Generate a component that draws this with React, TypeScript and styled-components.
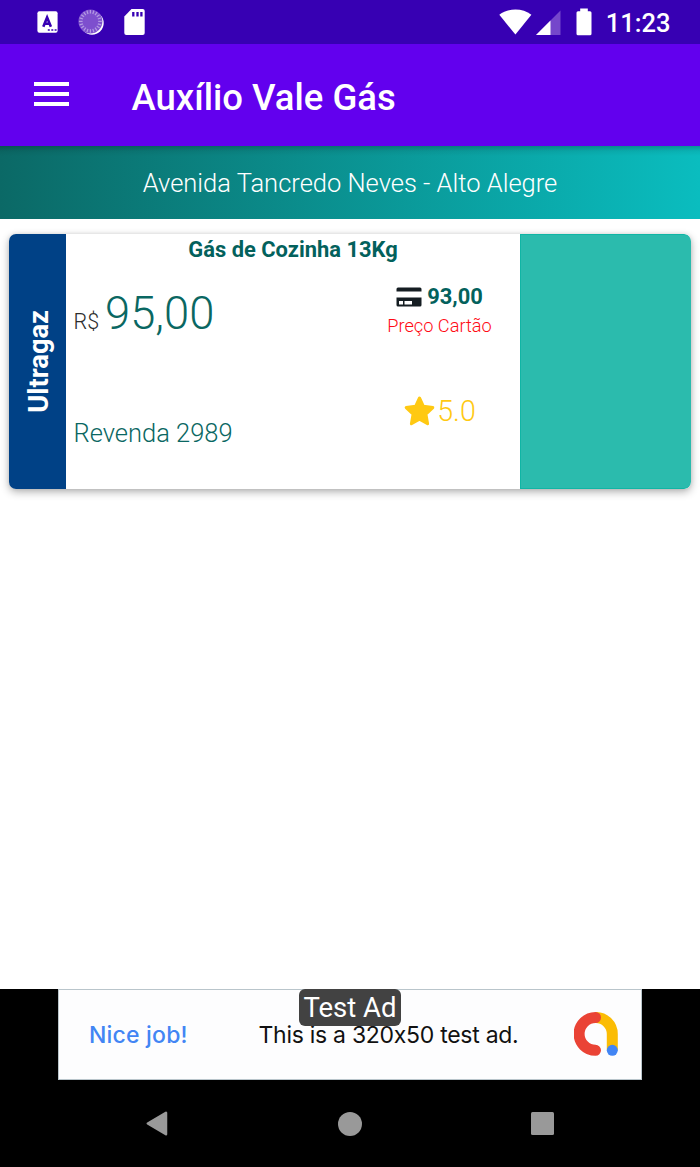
import React from "react";
import styled, { createGlobalStyle } from "styled-components";

const GlobalStyle = createGlobalStyle`
  * { box-sizing: border-box; }
  body { margin: 0; background: #fff; font-family: Roboto, sans-serif; }
  svg { display: block; flex: none; }
`;

const Screen = styled.div`
  width: 700px;
  height: 1167px;
  display: flex;
  flex-direction: column;
  overflow: hidden;
  background: #fff;
`;

const StatusBar = styled.header`
  height: 44px;
  flex: none;
  display: flex;
  align-items: center;
  justify-content: space-between;
  padding: 0 29.5px 0 37px;
  background: #3700b3;
  color: #fff;
`;

const StatusGroup = styled.div<{ $gap?: number }>`
  display: flex;
  align-items: center;
  gap: ${(p) => p.$gap ?? 0}px;
  height: 44px;
`;

const SignalIcon = styled.svg`
  margin: 0 15px 0 4px;
`;

const Clock = styled.span`
  font-size: 25.5px;
  font-weight: 500;
  line-height: 30px;
  margin-left: 14px;
  padding-top: 2px;
`;

const AppBar = styled.div`
  height: 102px;
  flex: none;
  display: flex;
  align-items: center;
  padding: 3px 0 0 34px;
  background: #6200ee;
  color: #fff;
`;

const MenuButton = styled.button`
  width: 35px;
  height: 24px;
  margin: 0 62.5px 6px 0;
  padding: 0;
  border: 0;
  background: none;
  display: flex;
  flex-direction: column;
  justify-content: space-between;
`;

const MenuLine = styled.span`
  height: 4px;
  background: #fff;
`;

const Title = styled.h1`
  margin: 0;
  padding-top: 2px;
  font-size: 36.5px;
  font-weight: 500;
  line-height: 44px;
`;

const AddressBar = styled.div`
  height: 73px;
  flex: none;
  display: flex;
  align-items: center;
  justify-content: center;
  background:
    linear-gradient(180deg, rgba(0, 0, 0, 0.22), rgba(0, 0, 0, 0.06) 5px, transparent 10px),
    linear-gradient(90deg, #0b6966, #0abdbf);
  color: #fff;
  font-size: 25.5px;
  font-weight: 300;
`;

const Content = styled.main`
  flex: 1;
  padding: 14.5px 9px;
`;

const Card = styled.article`
  height: 255px;
  display: flex;
  border-radius: 7px;
  background: #fff;
  overflow: hidden;
  box-shadow: 0 3px 8px rgba(0, 0, 0, 0.3), 0 0 4px rgba(0, 0, 0, 0.08);
`;

const Brand = styled.div`
  width: 56.5px;
  flex: none;
  display: flex;
  align-items: center;
  justify-content: center;
  padding-left: 3px;
  background: #004186;
  color: #fff;
`;

const BrandName = styled.span`
  writing-mode: vertical-rl;
  transform: rotate(180deg);
  font-size: 27.3px;
  font-weight: 700;
  line-height: 32px;
`;

const Details = styled.div`
  width: 454px;
  flex: none;
`;

const Product = styled.h2`
  margin: 0;
  padding-left: 1px;
  text-align: center;
  color: #03615c;
  font-size: 21.9px;
  font-weight: 700;
  line-height: 32px;
`;

const Columns = styled.div`
  display: grid;
  grid-template-columns: 294px 160px;
`;

const PriceColumn = styled.div`
  padding: 20px 0 0 8px;
  color: #0a6762;
`;

const Price = styled.div`
  display: flex;
  align-items: baseline;
  gap: 6px;
  font-size: 45.3px;
  font-weight: 300;
  line-height: 55px;
`;

const Currency = styled.span`
  color: #2c2c2c;
  font-size: 21.5px;
`;

const Reseller = styled.div`
  margin-top: 69px;
  font-size: 25.5px;
  font-weight: 300;
  line-height: 30px;
`;

const CardColumn = styled.div`
  padding-top: 18.5px;
  display: flex;
  flex-direction: column;
  align-items: center;
`;

const CardPrice = styled.div`
  display: flex;
  align-items: center;
  gap: 5px;
  color: #03615c;
  font-size: 21.9px;
  font-weight: 700;
  line-height: 26px;
`;

const CardLabel = styled.div`
  margin-top: 4px;
  color: #ff0a14;
  font-size: 18.2px;
  font-weight: 300;
  line-height: 24px;
`;

const Rating = styled.div`
  margin-top: 56px;
  padding-left: 1px;
  display: flex;
  align-items: center;
  gap: 2px;
  color: #ffc912;
  font-size: 28.6px;
  font-weight: 300;
  line-height: 34px;
`;

const Action = styled.div`
  flex: 1;
  background: #2bbbad;
  border: 1px solid #10b5a5;
  border-right: 0;
  border-radius: 0 7px 7px 0;
`;

const Footer = styled.footer`
  height: 178px;
  flex: none;
  background: #000;
`;

const Ad = styled.div`
  position: relative;
  width: 584px;
  height: 91px;
  margin: 0 auto;
  display: flex;
  align-items: center;
  padding-left: 30px;
  border: 1px solid #b9c5cb;
  background: #fdfdfe;
  font-family: Inter, sans-serif;
  font-size: 23px;
  line-height: 30px;
`;

const AdHeadline = styled.strong`
  width: 169.5px;
  color: #4285f4;
  font-weight: 500;
  letter-spacing: 0.2px;
`;

const AdText = styled.span`
  width: 315.5px;
  color: #111;
  letter-spacing: -0.28px;
  white-space: nowrap;
`;

const AdLogo = styled.svg`
  margin-bottom: 2px;
`;

const AdBadge = styled.span`
  position: absolute;
  left: 240px;
  top: -1px;
  width: 102px;
  height: 37px;
  border-radius: 6px;
  background: #424242;
  color: #fff;
  font: 400 27.5px/38px Roboto, sans-serif;
  text-align: center;
`;

const NavBar = styled.nav`
  height: 87px;
  display: flex;
  align-items: center;
  justify-content: space-between;
  padding: 0 146px;
`;

const rays = Array.from({ length: 20 }, (_, i) => i * 18);

export default function App() {
  return (
    <Screen>
      <GlobalStyle />
      <StatusBar>
        <StatusGroup $gap={20}>
          <svg width="21" height="22" viewBox="0 0 21 22">
            <rect x="0.4" y="0.3" width="20.2" height="21.4" rx="2" fill="#fff" />
            <path d="M6.3 15.8 10.1 6.5l3.8 9.3M7.8 12.7h4.6" fill="none" stroke="#3700b3" strokeWidth="2.6" />
            <path d="M10.8 19h2M14.3 19h2M17.6 19h2" stroke="#3700b3" strokeWidth="1.7" />
          </svg>
          <svg width="26" height="26" viewBox="0 0 26 26">
            <circle cx="14" cy="14" r="11.7" fill="#fff" />
            <circle cx="12.4" cy="12.4" r="12" fill="#7d4fce" />
            <g stroke="#b49be3" strokeWidth="1.2">
              {rays.map((a) => (
                <path key={a} d="M12.4 1v3.6" transform={`rotate(${a} 12.4 12.4)`} />
              ))}
            </g>
          </svg>
          <svg width="21" height="26" viewBox="0 0 21 26">
            <path d="M7.5 0H18.7a2 2 0 0 1 2 2v22a2 2 0 0 1-2 2H2.3a2 2 0 0 1-2-2V7.5z" fill="#fff" />
            <path d="M9.3 3v4.5M13.5 3v4.5M17.4 3v4.5" stroke="#3700b3" strokeWidth="2.3" />
          </svg>
        </StatusGroup>
        <StatusGroup>
          <svg width="33" height="26" viewBox="0 0 33 26">
            <path d="M.3 5.8C9.5-1.3 23.5-1.3 32.4 5.8L16.4 25.5z" fill="#fff" />
          </svg>
          <SignalIcon width="25" height="25" viewBox="0 0 25 25">
            <path d="M24.5.5V25H0z" fill="#7547cb" />
            <path d="M14.5 10.5V25H0z" fill="#fff" />
          </SignalIcon>
          <svg width="16" height="28" viewBox="0 0 16 28">
            <path d="M4.2 3.3V.5h7.6v2.8H14a1.5 1.5 0 0 1 1.5 1.5v21a1.5 1.5 0 0 1-1.5 1.5H2a1.5 1.5 0 0 1-1.5-1.5v-21A1.5 1.5 0 0 1 2 3.3z" fill="#fff" />
          </svg>
          <Clock>11:23</Clock>
        </StatusGroup>
      </StatusBar>
      <AppBar>
        <MenuButton aria-label="Menu">
          <MenuLine />
          <MenuLine />
          <MenuLine />
        </MenuButton>
        <Title>Auxílio Vale Gás</Title>
      </AppBar>
      <AddressBar>Avenida Tancredo Neves - Alto Alegre</AddressBar>
      <Content>
        <Card>
          <Brand>
            <BrandName>Ultragaz</BrandName>
          </Brand>
          <Details>
            <Product>Gás de Cozinha 13Kg</Product>
            <Columns>
              <PriceColumn>
                <Price>
                  <Currency>R$</Currency>
                  <span>95,00</span>
                </Price>
                <Reseller>Revenda 2989</Reseller>
              </PriceColumn>
              <CardColumn>
                <CardPrice>
                  <svg width="26" height="20" viewBox="0 0 26 20">
                    <path d="M.5 4.5V2A1.5 1.5 0 0 1 2 .5h22A1.5 1.5 0 0 1 25.5 2v2.5zM.5 10.5h25V18a1.5 1.5 0 0 1-1.5 1.5H2A1.5 1.5 0 0 1 .5 18z" fill="#151d22" />
                    <path d="M3 14h4v3.5H3zM8.5 14H16v3.5H8.5z" fill="#fff" />
                  </svg>
                  <span>93,00</span>
                </CardPrice>
                <CardLabel>Preço Cartão</CardLabel>
                <Rating>
                  <svg width="31" height="30" viewBox="0 0 31 30">
                    <path d="M15.5 2 19.4 10.3 28.8 11.6 21.9 18.1 23.6 27.7 15.5 23.2 7.4 27.7 9.1 18.1 2.2 11.6 11.6 10.3z" fill="#ffc912" stroke="#ffc912" strokeWidth="3" strokeLinejoin="round" />
                  </svg>
                  <span>5.0</span>
                </Rating>
              </CardColumn>
            </Columns>
          </Details>
          <Action />
        </Card>
      </Content>
      <Footer>
        <Ad>
          <AdHeadline>Nice job!</AdHeadline>
          <AdText>This is a 320x50 test ad.</AdText>
          <AdLogo width="44" height="44" viewBox="0 0 44 44">
            <path d="M21.5 5.5A16.5 16.5 0 0 1 38.3 22v16" fill="none" stroke="#fbbc04" strokeWidth="11" />
            <path d="M21.5 5.5a16.4 16.4 0 1 0 0 32.8" fill="none" stroke="#ea4335" strokeWidth="11" strokeLinecap="round" />
            <circle cx="38.3" cy="38.3" r="5.5" fill="#4285f4" />
          </AdLogo>
          <AdBadge>Test Ad</AdBadge>
        </Ad>
        <NavBar>
          <svg width="22" height="25" viewBox="0 0 22 25">
            <path d="M20 1.8v21.4L1.8 12.5z" fill="#999" stroke="#999" strokeWidth="2.5" strokeLinejoin="round" />
          </svg>
          <svg width="24" height="24" viewBox="0 0 24 24">
            <circle cx="12" cy="12" r="12" fill="#999" />
          </svg>
          <svg width="23" height="23" viewBox="0 0 23 23">
            <rect width="23" height="23" rx="1.5" fill="#999" />
          </svg>
        </NavBar>
      </Footer>
    </Screen>
  );
}
